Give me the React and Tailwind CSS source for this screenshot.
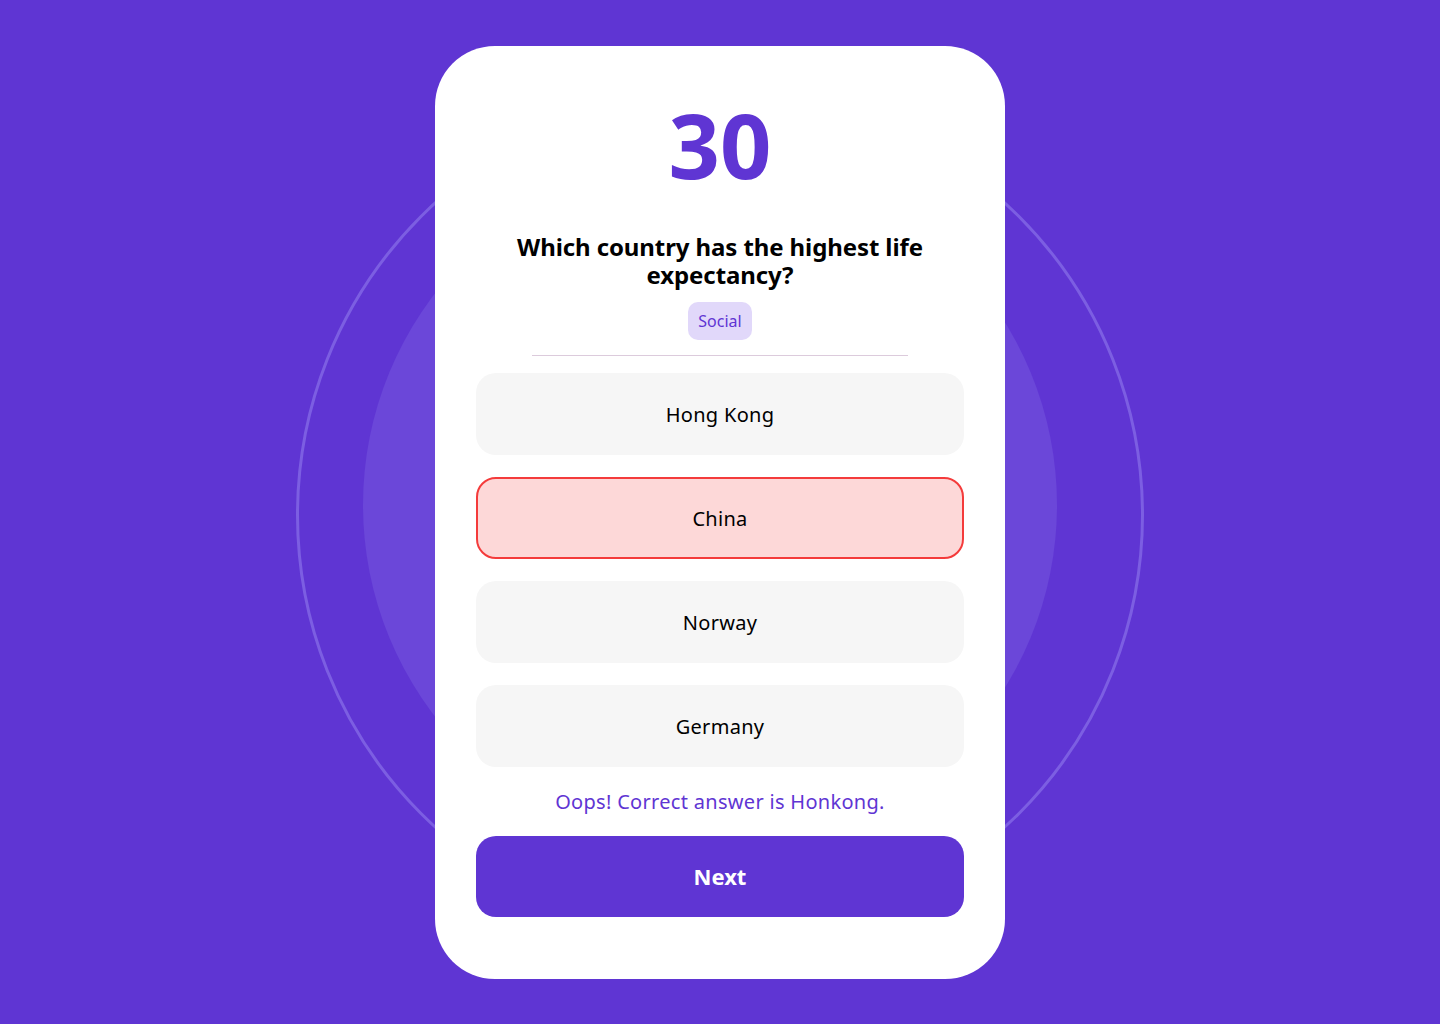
import React, { useState } from "react";

const options = ["Hong Kong", "China", "Norway", "Germany"];

const App = () => {
  const [picked] = useState("China");

  return (
    <div
      className="relative w-full h-[1024px] bg-[#5f35d3] overflow-hidden flex items-center justify-center"
      style={{ fontFamily: '"Noto Sans", "Open Sans", sans-serif' }}
    >
      {/* background circles */}
      <div className="absolute left-[296px] top-[91px] w-[848px] h-[848px] rounded-full border-[3px] border-[#7c5ee2]" />
      <div className="absolute left-[363px] top-[158px] w-[694px] h-[694px] rounded-full bg-[#6b47d9]" />

      {/* card */}
      <div className="relative w-[570px] h-[933px] bg-white rounded-[60px] px-[41px] pt-[53px] pb-[62px] flex flex-col items-center">
        <p className="text-[90px] leading-none font-bold text-[#5f35d3] h-[90px]">30</p>

        <h1 className="mt-[44px] w-[430px] text-center text-[24px] leading-[28px] font-bold tracking-[-0.1px] text-black">
          Which country has the highest life expectancy?
        </h1>

        <span className="mt-[13px] h-[38px] px-[10px] flex items-center rounded-[10px] bg-[#e1d8fa] text-[#5f35d3] text-[16px]">
          Social
        </span>

        <div className="mt-[15px] w-[376px] h-px bg-[#dccbdc]" />

        <div className="mt-[17px] w-full flex flex-col gap-[22px]">
          {options.map((opt) => (
            <button
              key={opt}
              className={
                opt === picked
                  ? "h-[82px] w-full pt-[2px] rounded-[20px] border-2 border-[#f43b3b] bg-[#fdd8d8] text-[20px] tracking-[0.3px] text-black"
                  : "h-[82px] w-full pt-[2px] rounded-[20px] bg-[#f6f6f6] text-[20px] tracking-[0.3px] text-black"
              }
            >
              {opt}
            </button>
          ))}
        </div>

        <p className="mt-[21px] text-[20px] leading-[28px] tracking-[0.3px] text-[#5f35d3]">
          Oops! Correct answer is Honkong.
        </p>

        <button className="mt-[20px] h-[81px] w-full rounded-[20px] bg-[#5f35d3] text-white text-[22px] font-bold">
          Next
        </button>
      </div>
    </div>
  );
};

export default App;
